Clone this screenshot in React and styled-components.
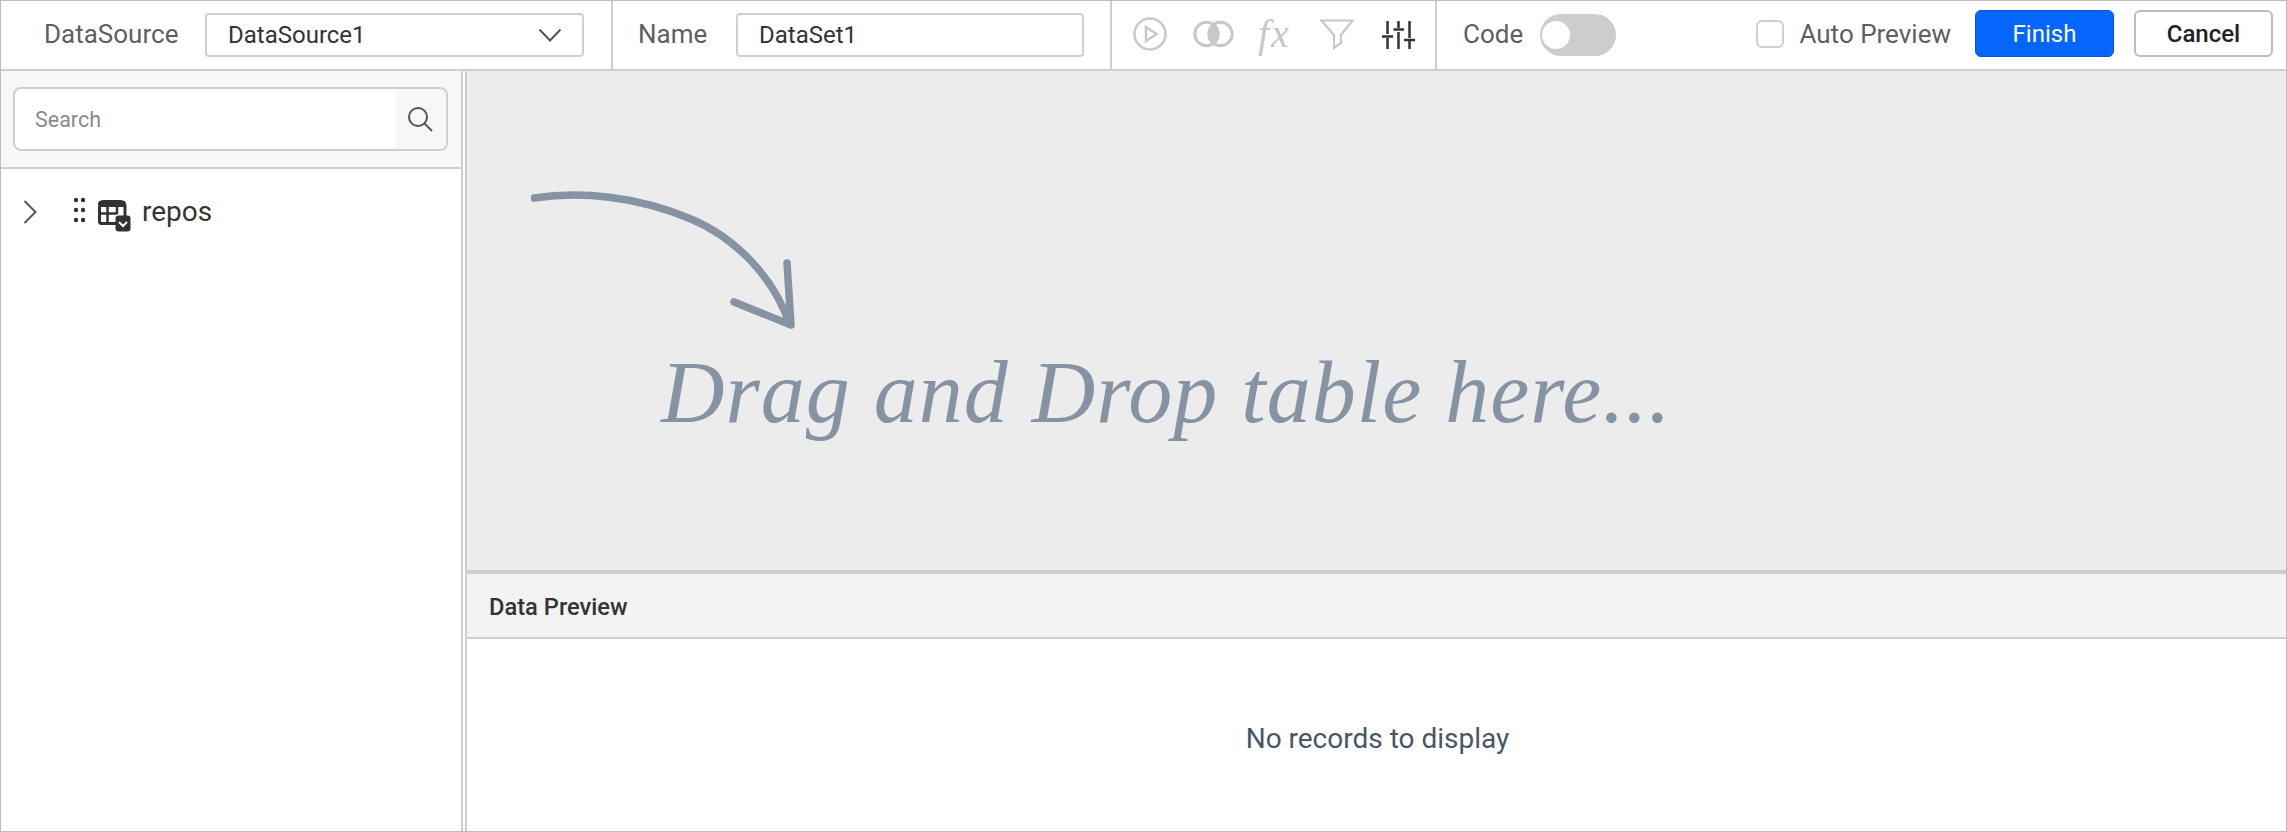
// dataset designer screen
import React from 'react';
import styled, { createGlobalStyle } from 'styled-components';

const Global = createGlobalStyle`
  html, body { margin: 0; padding: 0; background: #fff; }
  * { box-sizing: border-box; }
  body { font-family: Roboto, "Liberation Sans", sans-serif; }
`;

const Page = styled.div`
  width: 2287px;
  height: 832px;
  display: flex;
  flex-direction: column;
  border: 1px solid #bdbdbd;
  overflow: hidden;
  background: #fff;
`;

const Toolbar = styled.div`
  height: 70px;
  flex: none;
  display: flex;
  border-bottom: 2px solid #cfcfcf;
`;

const Section = styled.div`
  width: ${p => p.$w}px;
  flex: ${p => (p.$grow ? 1 : 'none')};
  display: flex;
  align-items: center;
  padding: ${p => p.$pad || '0'};
  border-right: ${p => (p.$last ? 'none' : '2px solid #cfcfcf')};
`;

const Label = styled.span`
  font-size: 26px;
  color: #5f5f5f;
  width: ${p => p.$w}px;
  flex: none;
  margin-top: -2px;
`;

const Field = styled.div`
  width: ${p => p.$w}px;
  height: 44px;
  display: flex;
  align-items: center;
  justify-content: space-between;
  padding: 0 20px 0 21px;
  border: 2px solid #cfcfcf;
  border-radius: 4px;
  font-size: 24px;
  color: #333;
  background: #fff;
`;

const IconRow = styled.div`
  display: flex;
  align-items: center;
  margin-top: -2px;
`;

const FxGlyph = styled.span`
  font-family: "Liberation Serif", serif;
  font-style: italic;
  font-size: 40px;
  line-height: 1;
  letter-spacing: 2px;
  color: #c8c8c8;
  width: 32px;
  margin-left: 24px;
`;

const Toggle = styled.div`
  width: 76px;
  height: 42px;
  border-radius: 21px;
  background: #cdcdcd;
  display: flex;
  align-items: center;
  padding-left: 2px;
  margin-left: 17px;
  &::before {
    content: '';
    width: 28px;
    height: 28px;
    border-radius: 50%;
    background: #fff;
  }
`;

const Spacer = styled.div`
  flex: 1;
`;

const Check = styled.div`
  width: 28px;
  height: 28px;
  border: 2px solid #cfcfcf;
  border-radius: 6px;
  margin-right: 15px;
  margin-top: -2px;
  background: #fff;
`;

const Button = styled.button`
  width: ${p => p.$w}px;
  height: 47px;
  margin-top: -3px;
  margin-left: ${p => p.$ml || 0}px;
  border-radius: 6px;
  font-family: inherit;
  font-size: 24px;
  cursor: pointer;
  font-weight: ${p => (p.$primary ? 400 : 500)};
  color: ${p => (p.$primary ? '#fff' : '#222')};
  background: ${p => (p.$primary ? '#0565ff' : '#fff')};
  border: ${p => (p.$primary ? '1px solid #0a56d0' : '2px solid #bdbdbd')};
`;

const Body = styled.div`
  flex: 1;
  display: flex;
  min-height: 0;
`;

const Sidebar = styled.aside`
  width: 462px;
  flex: none;
  display: flex;
  flex-direction: column;
  border-right: 2px solid #cfcfcf;
`;

const SearchWrap = styled.div`
  height: 98px;
  flex: none;
  padding: 16px 13px 0 12px;
  background: #f7f7f7;
  border-bottom: 2px solid #cfcfcf;
`;

const SearchBox = styled.div`
  height: 64px;
  display: flex;
  border: 2px solid #cfcfcf;
  border-radius: 8px;
  overflow: hidden;
  background: #fff;
`;

const SearchText = styled.div`
  flex: 1;
  padding-left: 20px;
  display: flex;
  align-items: center;
  font-size: 21.5px;
  color: #8a8a8a;
`;

const SearchBtn = styled.div`
  width: 50px;
  display: flex;
  align-items: center;
  justify-content: center;
  background: #f7f7f7;
`;

const TreeRow = styled.div`
  display: flex;
  align-items: flex-start;
  padding: 31px 0 0 22px;
`;

const RepoName = styled.span`
  font-size: 28px;
  line-height: 30px;
  color: #333;
  margin-left: 11px;
  margin-top: -3px;
`;

const TableIcon = styled.div`
  position: relative;
  width: 33px;
  height: 32px;
  margin-left: 13px;
`;

const Main = styled.main`
  flex: 1;
  min-width: 0;
  margin-left: 2px;
  display: flex;
  flex-direction: column;
  border-left: 2px solid #cfcfcf;
`;

const DropArea = styled.div`
  flex: 1;
  background: #ececec;
  padding: 117px 0 0 64px;
`;

const HandText = styled.div`
  font-family: "Liberation Serif", serif;
  font-style: italic;
  font-size: 88px;
  line-height: 100px;
  color: #8593a3;
  margin: 10px 0 0 130px;
  white-space: nowrap;
  letter-spacing: 1px;
`;

const PreviewHead = styled.div`
  height: 69px;
  flex: none;
  display: flex;
  align-items: center;
  padding: 3px 0 0 22px;
  background: #f3f3f3;
  border-top: 4px solid #cdcdcd;
  border-bottom: 2px solid #cfcfcf;
  font-size: 23.7px;
  font-weight: 500;
  color: #333;
`;

const PreviewBody = styled.div`
  height: 192px;
  flex: none;
  display: flex;
  justify-content: center;
  padding: 84px 0 0 2px;
  font-size: 28px;
  line-height: 32px;
  color: #4a5568;
`;

const Chevron = ({ dir }) => (
  dir === 'down'
    ? <svg width="24" height="14" viewBox="0 0 24 14"><path d="M1.5 1.5 12 12.5 22.5 1.5" fill="none" stroke="#555" strokeWidth="2" /></svg>
    : <svg width="14" height="24" viewBox="0 0 14 24"><path d="M1.5 1 12.5 12 1.5 23" fill="none" stroke="#555" strokeWidth="2" /></svg>
);

const grey = '#c8c8c8';

function App() {
  return (
    <Page>
      <Global />
      <Toolbar>
        <Section $w={612} $pad="0 0 0 43px">
          <Label $w={161}>DataSource</Label>
          <Field $w={379}>
            DataSource1
            <Chevron dir="down" />
          </Field>
        </Section>
        <Section $w={499} $pad="0 0 0 25px">
          <Label $w={98}>Name</Label>
          <Field $w={348}>DataSet1</Field>
        </Section>
        <Section $w={325} $pad="0 0 0 21px">
          <IconRow>
            <svg width="34" height="34" viewBox="0 0 34 34">
              <circle cx="17" cy="17" r="15.5" fill="none" stroke={grey} strokeWidth="2.5" />
              <path d="M13 10 23.5 17 13 24Z" fill="none" stroke={grey} strokeWidth="2.5" />
            </svg>
            <svg width="41" height="28" viewBox="0 0 41 28" style={{ marginLeft: 26 }}>
              <path d="M20.5 4.8a11.5 11.5 0 0 1 0 18.4a11.5 11.5 0 0 1 0-18.4Z" fill={grey} />
              <circle cx="13.5" cy="14" r="11.7" fill="none" stroke={grey} strokeWidth="3" />
              <circle cx="27.5" cy="14" r="11.7" fill="none" stroke={grey} strokeWidth="3" />
            </svg>
            <FxGlyph>fx</FxGlyph>
            <svg width="34" height="31" viewBox="0 0 34 31" style={{ marginLeft: 30 }}>
              <path d="M1.5 1.5H32.5L21 16V24L14 29V16Z" fill="none" stroke={grey} strokeWidth="2.2" />
            </svg>
            <svg width="33" height="29" viewBox="0 0 33 29" style={{ marginLeft: 28 }}>
              <path d="M5.5 1v13M5.5 18v11M16.5 1v7M16.5 12v17M27.5 1v17M27.5 21v8" fill="none" stroke="#333" strokeWidth="2.5" />
              <path d="M0 16.5h11M11.5 9.5h10.5M22 20h11" fill="none" stroke="#333" strokeWidth="2.5" />
            </svg>
          </IconRow>
        </Section>
        <Section $grow $last $pad="0 13px 0 26px">
          <Label>Code</Label>
          <Toggle />
          <Spacer />
          <Check />
          <Label>Auto Preview</Label>
          <Button $primary $w={139} $ml={24}>Finish</Button>
          <Button $w={139} $ml={20}>Cancel</Button>
        </Section>
      </Toolbar>
      <Body>
        <Sidebar>
          <SearchWrap>
            <SearchBox>
              <SearchText>Search</SearchText>
              <SearchBtn>
                <svg width="26" height="26" viewBox="0 0 26 26" style={{ marginRight: 2 }}>
                  <circle cx="11" cy="11" r="9" fill="none" stroke="#555" strokeWidth="2" />
                  <path d="M17.5 17.5 25 25" fill="none" stroke="#555" strokeWidth="2" />
                </svg>
              </SearchBtn>
            </SearchBox>
          </SearchWrap>
          <TreeRow>
            <Chevron dir="right" />
            <svg width="12" height="26" viewBox="0 0 12 26" style={{ marginLeft: 36, marginTop: -3 }}>
              <g fill="#333">
                <circle cx="3" cy="3" r="2.2" /><circle cx="10" cy="3" r="2.2" />
                <circle cx="3" cy="13" r="2.2" /><circle cx="10" cy="13" r="2.2" />
                <circle cx="3" cy="23" r="2.2" /><circle cx="10" cy="23" r="2.2" />
              </g>
            </svg>
            <TableIcon>
              <svg width="33" height="32" viewBox="0 0 33 32">
                <path d="M1.5 6V21.5a2 2 0 0 0 2 2H18M1 5.5a4 4 0 0 1 4-4H23a4 4 0 0 1 4 4V17" fill="none" stroke="#333" strokeWidth="3" />
                <path d="M1 4h26" stroke="#333" strokeWidth="6" />
                <path d="M1 13.5h18M9.5 6v17M19 6v8" stroke="#333" strokeWidth="2.5" fill="none" />
                <rect x="17.5" y="15.5" width="15" height="16" rx="3" fill="#333" />
                <path d="M21 22 25 26 29 22" fill="none" stroke="#fff" strokeWidth="2" />
              </svg>
            </TableIcon>
            <RepoName>repos</RepoName>
          </TreeRow>
        </Sidebar>
        <Main>
          <DropArea>
            <svg width="270" height="145" viewBox="0 0 270 145" style={{ display: 'block' }}>
              <g fill="none" stroke="#8593a3" strokeLinecap="round" strokeLinejoin="round">
                <path d="M3 10C50 3 105 8 160 31C205 50 243 90 258 135" strokeWidth="7.5" />
                <path d="M256 75L260 137L203 114" strokeWidth="7.5" />
              </g>
            </svg>
            <HandText>Drag and Drop table here...</HandText>
          </DropArea>
          <PreviewHead>Data Preview</PreviewHead>
          <PreviewBody>No records to display</PreviewBody>
        </Main>
      </Body>
    </Page>
  );
}

export default App;
